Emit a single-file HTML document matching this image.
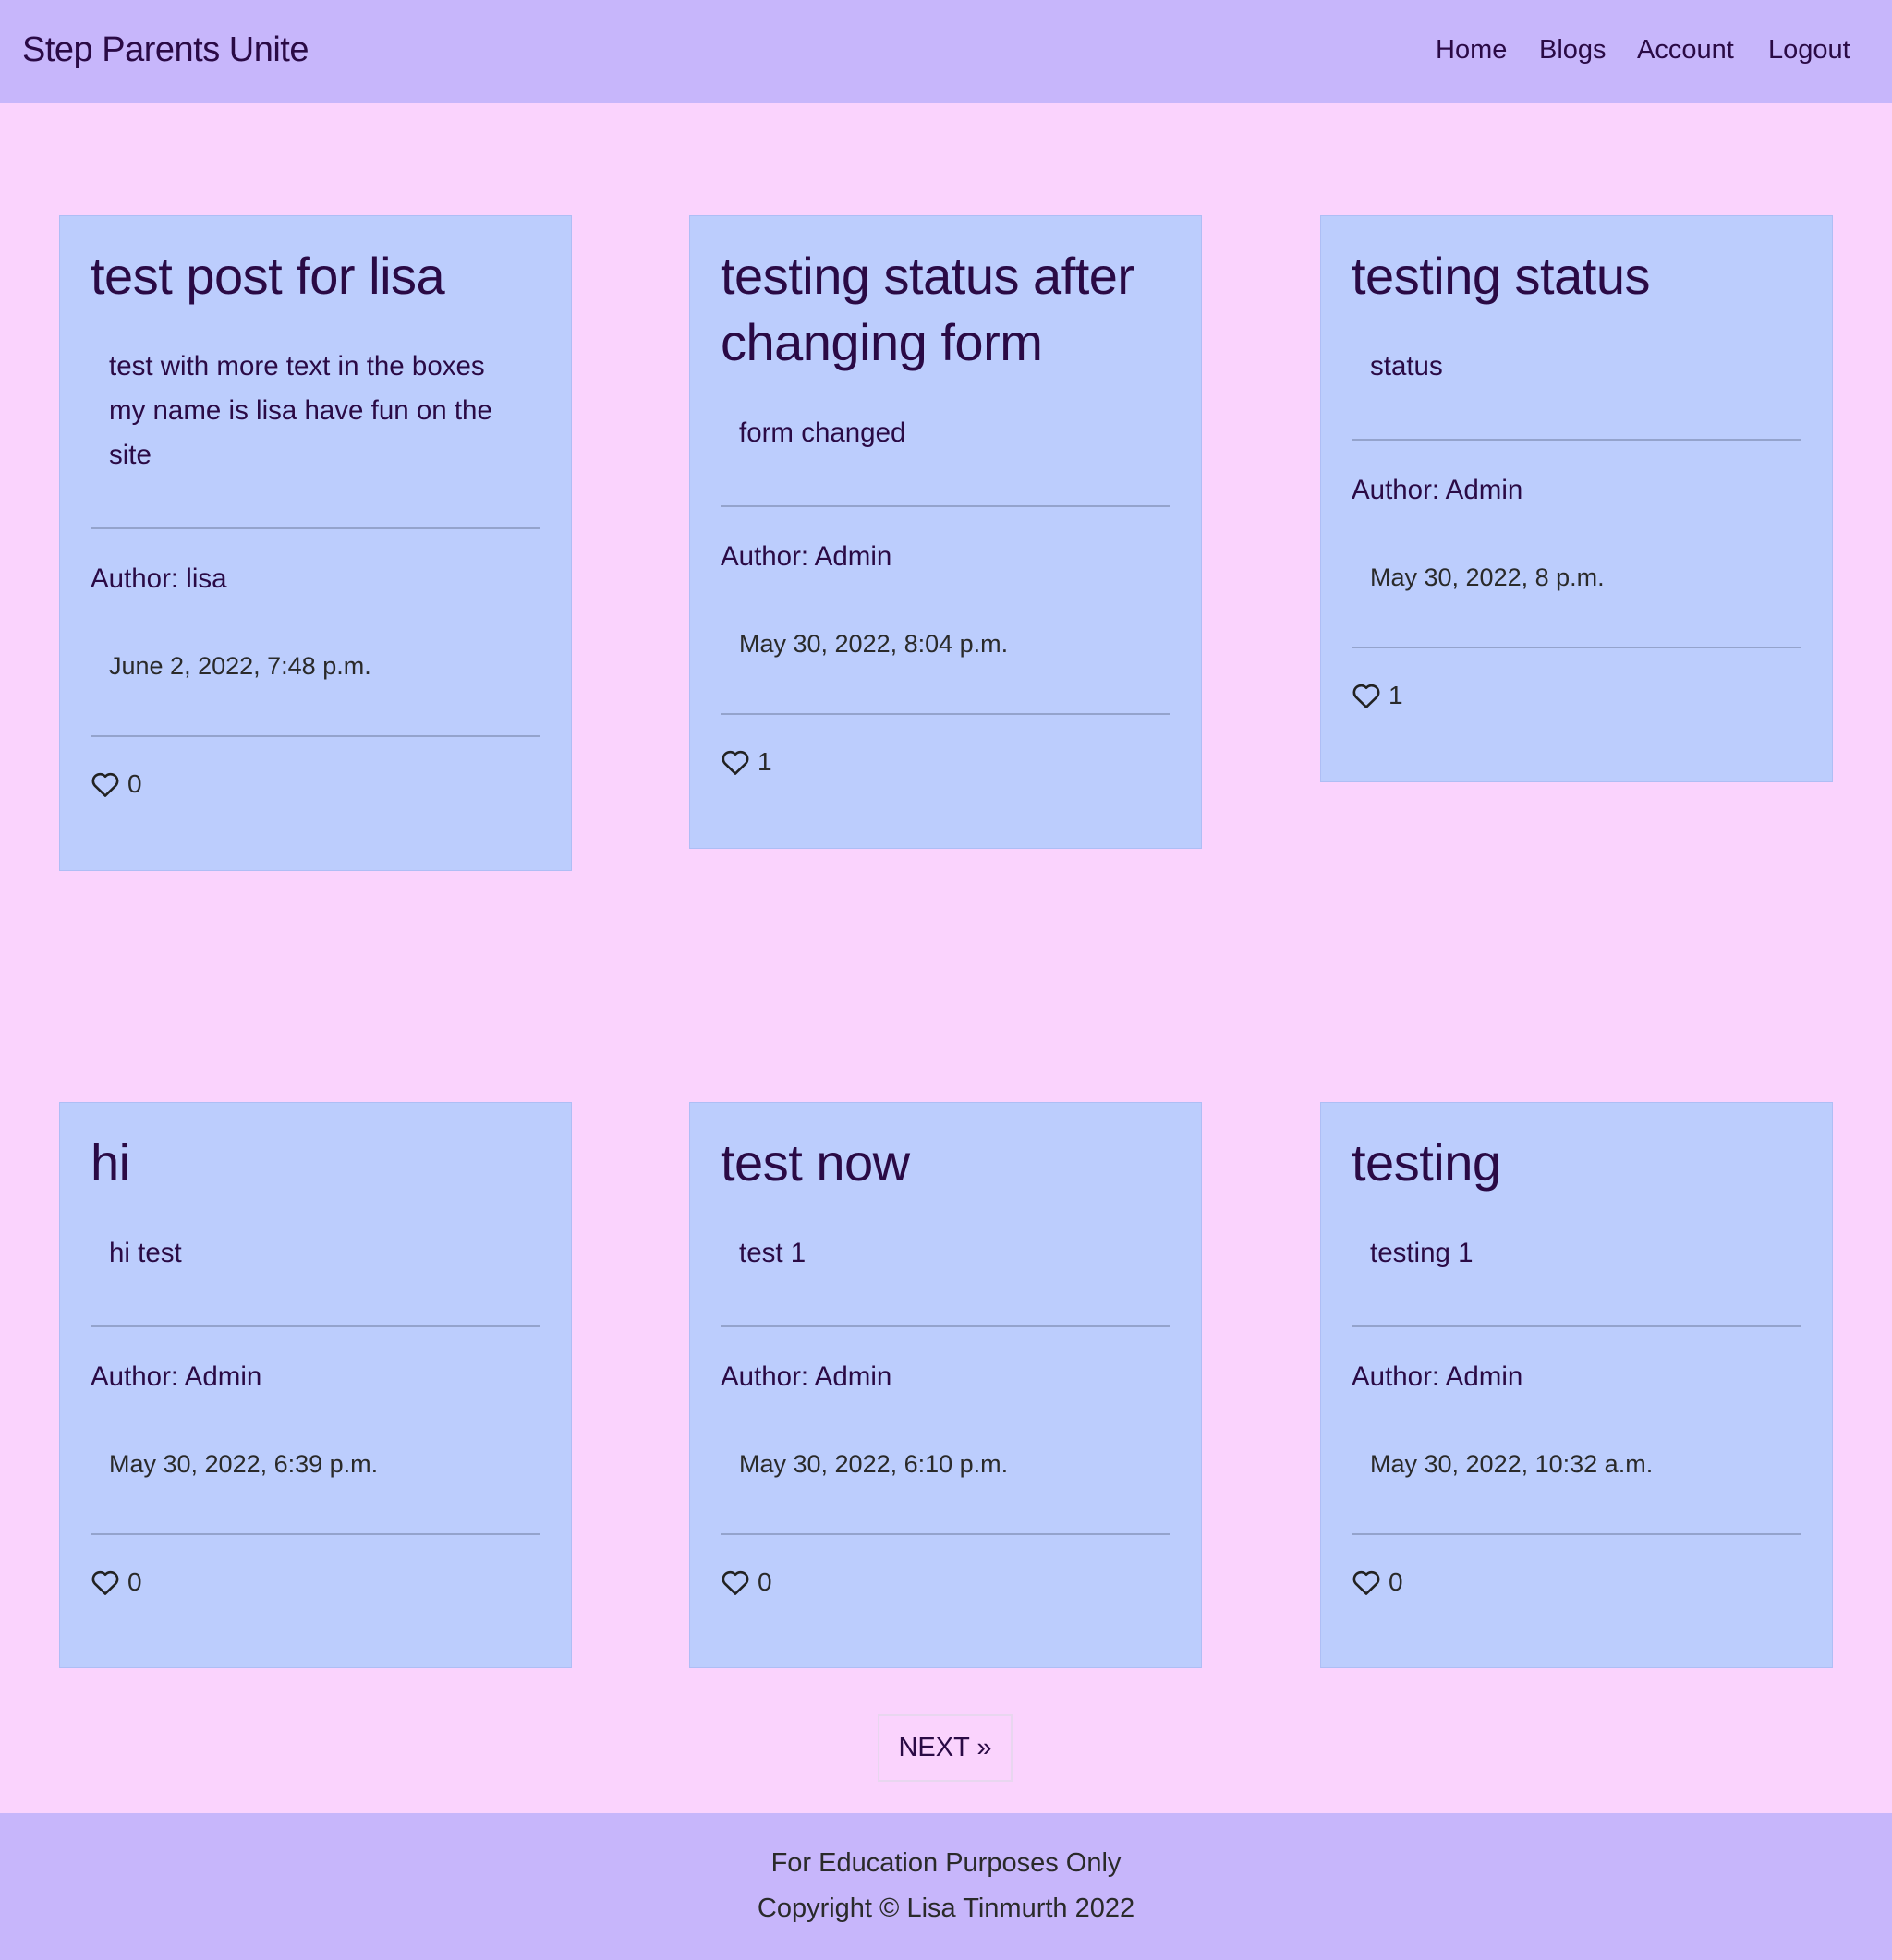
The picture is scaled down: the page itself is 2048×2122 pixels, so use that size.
<!DOCTYPE html>
<html><head><meta charset="utf-8"><style>
*{margin:0;padding:0;box-sizing:border-box}
body{width:2048px;height:2122px;background:#fad3fd;font-family:"Liberation Sans",sans-serif;position:relative;overflow:hidden;color:#2a0a45}
.nav{position:absolute;left:0;top:0;width:2048px;height:111px;background:#c7b6fb}
.brand{position:absolute;left:24px;top:29px;font-size:38px;line-height:50px;letter-spacing:-0.5px}
.nl{position:absolute;top:34px;font-size:29px;line-height:40px}
.card{position:absolute;width:555px;background:#bccdfd;border:1px solid #aebef5;padding:0 33px}
.card h2{font-weight:normal;font-size:56px;line-height:72px;margin-top:29px;letter-spacing:-0.5px}
.b{font-size:29.5px;line-height:48px;margin-top:38px;padding-left:20px}
.hr{height:2px;background:#94a3cc;margin-top:54px}
.a{font-size:29.5px;line-height:48px;margin-top:30px}
.d{font-size:27px;line-height:48px;margin-top:46px;padding-left:20px;color:#2a2a2a}
.hr2{height:2px;background:#94a3cc;margin-top:51px}
.l{font-size:28px;line-height:48px;margin-top:27px;color:#2a2a2a;display:flex;align-items:center}
.l svg{margin-right:8px}
.next{position:absolute;left:950px;top:1856px;width:146px;height:73px;border:2px solid #e8d6ef;font-size:29px;line-height:69px;text-align:center;color:#2a0a45}
.foot{position:absolute;left:0;top:1963px;width:2048px;height:159px;background:#c7b6fb;text-align:center;font-size:29px;line-height:49px;color:#2a2a2a;padding-top:30px}
</style></head><body>
<div class="nav">
<div class="brand">Step Parents Unite</div>
<div class="nl" style="left:1554px">Home</div>
<div class="nl" style="left:1666px">Blogs</div>
<div class="nl" style="left:1772px">Account</div>
<div class="nl" style="left:1914px">Logout</div>
</div>

<div class="card" style="left:64px;top:233px;height:710px">
<h2>test post for lisa</h2>
<div class="b">test with more text in the boxes<br>my name is lisa have fun on the<br>site</div>
<div class="hr"></div>
<div class="a">Author: lisa</div>
<div class="d">June 2, 2022, 7:48 p.m.</div>
<div class="hr2"></div>
<div class="l"><svg width="32" height="30" viewBox="0 0 16 15"><path d="M8 13.8 L2.3 8.2 A3.3 3.3 0 0 1 8 3.4 A3.3 3.3 0 0 1 13.7 8.2 Z" fill="none" stroke="#222" stroke-width="1.3" stroke-linejoin="round"/></svg>0</div>
</div>

<div class="card" style="left:746px;top:233px;height:686px">
<h2>testing status after<br>changing form</h2>
<div class="b">form changed</div>
<div class="hr"></div>
<div class="a">Author: Admin</div>
<div class="d">May 30, 2022, 8:04 p.m.</div>
<div class="hr2"></div>
<div class="l"><svg width="32" height="30" viewBox="0 0 16 15"><path d="M8 13.8 L2.3 8.2 A3.3 3.3 0 0 1 8 3.4 A3.3 3.3 0 0 1 13.7 8.2 Z" fill="none" stroke="#222" stroke-width="1.3" stroke-linejoin="round"/></svg>1</div>
</div>

<div class="card" style="left:1429px;top:233px;height:614px">
<h2>testing status</h2>
<div class="b">status</div>
<div class="hr"></div>
<div class="a">Author: Admin</div>
<div class="d">May 30, 2022, 8 p.m.</div>
<div class="hr2"></div>
<div class="l"><svg width="32" height="30" viewBox="0 0 16 15"><path d="M8 13.8 L2.3 8.2 A3.3 3.3 0 0 1 8 3.4 A3.3 3.3 0 0 1 13.7 8.2 Z" fill="none" stroke="#222" stroke-width="1.3" stroke-linejoin="round"/></svg>1</div>
</div>

<div class="card" style="left:64px;top:1193px;height:613px">
<h2>hi</h2>
<div class="b">hi test</div>
<div class="hr"></div>
<div class="a">Author: Admin</div>
<div class="d">May 30, 2022, 6:39 p.m.</div>
<div class="hr2"></div>
<div class="l"><svg width="32" height="30" viewBox="0 0 16 15"><path d="M8 13.8 L2.3 8.2 A3.3 3.3 0 0 1 8 3.4 A3.3 3.3 0 0 1 13.7 8.2 Z" fill="none" stroke="#222" stroke-width="1.3" stroke-linejoin="round"/></svg>0</div>
</div>

<div class="card" style="left:746px;top:1193px;height:613px">
<h2>test now</h2>
<div class="b">test 1</div>
<div class="hr"></div>
<div class="a">Author: Admin</div>
<div class="d">May 30, 2022, 6:10 p.m.</div>
<div class="hr2"></div>
<div class="l"><svg width="32" height="30" viewBox="0 0 16 15"><path d="M8 13.8 L2.3 8.2 A3.3 3.3 0 0 1 8 3.4 A3.3 3.3 0 0 1 13.7 8.2 Z" fill="none" stroke="#222" stroke-width="1.3" stroke-linejoin="round"/></svg>0</div>
</div>

<div class="card" style="left:1429px;top:1193px;height:613px">
<h2>testing</h2>
<div class="b">testing 1</div>
<div class="hr"></div>
<div class="a">Author: Admin</div>
<div class="d">May 30, 2022, 10:32 a.m.</div>
<div class="hr2"></div>
<div class="l"><svg width="32" height="30" viewBox="0 0 16 15"><path d="M8 13.8 L2.3 8.2 A3.3 3.3 0 0 1 8 3.4 A3.3 3.3 0 0 1 13.7 8.2 Z" fill="none" stroke="#222" stroke-width="1.3" stroke-linejoin="round"/></svg>0</div>
</div>

<div class="next">NEXT »</div>

<div class="foot">For Education Purposes Only<br>Copyright © Lisa Tinmurth 2022</div>
</body></html>
